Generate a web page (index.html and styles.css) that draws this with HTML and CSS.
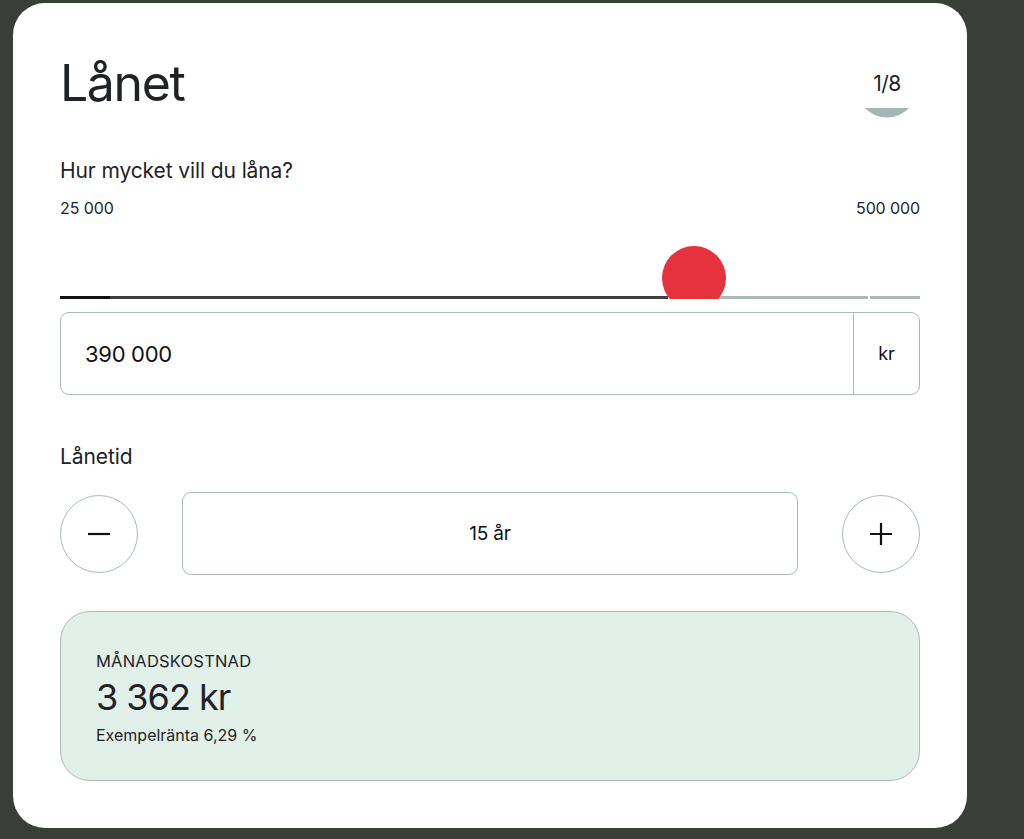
FILE: index.html
```html
<!DOCTYPE html>
<html lang="sv">
<head>
<meta charset="utf-8">
<title>Lånet</title>
<link rel="stylesheet" href="styles.css">
</head>
<body>
<main class="card">
  <header class="header">
    <h1 class="title">Lånet</h1>
    <div class="progress">
      <svg class="progress-fill" width="62" height="62" viewBox="0 0 62 62" aria-hidden="true">
        <defs><clipPath id="pc"><circle cx="31" cy="31" r="30.5"/></clipPath></defs>
        <rect x="0" y="52" width="62" height="10" fill="#a3b6b4" clip-path="url(#pc)"/>
      </svg>
      <span class="progress-text">1/8</span>
    </div>
  </header>

  <section class="amount">
    <label class="label">Hur mycket vill du låna?</label>
    <div class="range-labels"><span>25 000</span><span>500 000</span></div>
    <div class="slider">
      <div class="track">
        <div class="track-min"></div>
        <div class="track-filled"></div>
        <div class="track-gap"></div>
        <div class="track-rest"></div>
        <div class="track-tick"></div>
        <div class="track-end"></div>
      </div>
      <div class="thumb"></div>
    </div>
    <div class="input-group">
      <div class="input-value">390 000</div>
      <div class="input-unit">kr</div>
    </div>
  </section>

  <section class="term">
    <label class="label">Lånetid</label>
    <div class="stepper">
      <button class="step-btn" aria-label="Minska">
        <svg width="24" height="24" viewBox="0 0 24 24"><path d="M1 12h22" stroke="#111" stroke-width="2.2"/></svg>
      </button>
      <div class="step-value">15 år</div>
      <button class="step-btn" aria-label="Öka">
        <svg width="24" height="24" viewBox="0 0 24 24"><path d="M1 12h22M12 1v22" stroke="#111" stroke-width="2.2"/></svg>
      </button>
    </div>
  </section>

  <section class="result">
    <div class="result-label">MÅNADSKOSTNAD</div>
    <div class="result-value">3 362 kr</div>
    <div class="result-note">Exempelränta 6,29 %</div>
  </section>
</main>
</body>
</html>
```

FILE: styles.css
```css
* { box-sizing: border-box; }
html, body { margin: 0; padding: 0; }
body {
  background: #393e38;
  font-family: Inter, "Liberation Sans", sans-serif;
  color: #1f2326;
  height: 839px;
  overflow: hidden;
}
.card {
  margin: 3px 0 0 13px;
  width: 954px;
  height: 825px;
  background: #fff;
  border-radius: 32px;
  padding: 56px 47px 0 47px;
}
.header {
  display: flex;
  justify-content: space-between;
  align-items: flex-start;
  height: 62px;
}
.title {
  margin: 0;
  font-size: 50px;
  font-weight: 400;
  line-height: 48px;
  letter-spacing: -1.4px;
}
.progress {
  position: relative;
  width: 62px;
  height: 62px;
  margin-right: 2px;
  margin-top: -3px;
  display: flex;
  align-items: center;
  justify-content: center;
}
.progress-fill {
  position: absolute;
  left: 0;
  top: 0;
}
.progress-text {
  position: relative;
  top: -4px;
  font-size: 21px;
  letter-spacing: -0.5px;
  line-height: 1;
}
.amount { margin-top: 36px; }
.label {
  display: block;
  font-size: 21px;
  line-height: 28px;
  letter-spacing: -0.1px;
}
.range-labels {
  display: flex;
  justify-content: space-between;
  font-size: 16px;
  line-height: 20px;
  letter-spacing: -0.1px;
  margin-top: 13px;
}
.slider {
  position: relative;
  height: 70px;
  overflow: hidden;
  margin-top: 11px;
}
.track {
  position: absolute;
  left: 0;
  right: 0;
  bottom: 0;
  height: 3px;
  display: flex;
}
.track-min { width: 50px; background: #111; }
.track-filled { width: 558px; background: #3f413f; }
.track-gap { width: 50px; }
.track-rest { width: 150px; background: #a9bbb9; }
.track-tick { width: 2px; background: #fff; }
.track-end { flex: 1; background: #a9bbb9; }
.thumb {
  position: absolute;
  left: 602px;
  top: 17px;
  width: 64px;
  height: 64px;
  border-radius: 50%;
  background: #e5323d;
}
.input-group {
  margin-top: 13px;
  display: flex;
  height: 83px;
  border: 1px solid #a9bbb9;
  border-radius: 9px;
}
.input-value {
  flex: 1;
  display: flex;
  align-items: center;
  padding-left: 24px;
  font-size: 22px;
  letter-spacing: -0.3px;
  color: #111;
}
.input-unit {
  width: 66px;
  border-left: 1px solid #a9bbb9;
  display: flex;
  align-items: center;
  justify-content: center;
  font-size: 18px;
  color: #111;
}
.term { margin-top: 48px; }
.stepper {
  margin-top: 21px;
  display: flex;
  align-items: center;
  gap: 44px;
}
.step-btn {
  width: 78px;
  height: 78px;
  border-radius: 50%;
  border: 1px solid #a9bbb9;
  background: #fff;
  display: flex;
  align-items: center;
  justify-content: center;
  padding: 0;
  flex: none;
}
.step-value {
  flex: 1;
  height: 83px;
  border: 1px solid #a9bbb9;
  border-radius: 9px;
  display: flex;
  align-items: center;
  justify-content: center;
  font-size: 19px;
  letter-spacing: -0.2px;
  color: #111;
}
.result {
  margin-top: 36px;
  height: 170px;
  background: #e2f0ea;
  border: 1px solid #a9bbb9;
  border-radius: 30px;
  padding: 39px 35px 0;
}
.result-label {
  font-size: 16.5px;
  line-height: 20px;
  letter-spacing: 0.2px;
}
.result-value {
  font-size: 36px;
  line-height: 40px;
  letter-spacing: -1px;
  margin-top: 6px;
}
.result-note {
  font-size: 16px;
  line-height: 20px;
  letter-spacing: 0;
  margin-top: 8px;
}
```
